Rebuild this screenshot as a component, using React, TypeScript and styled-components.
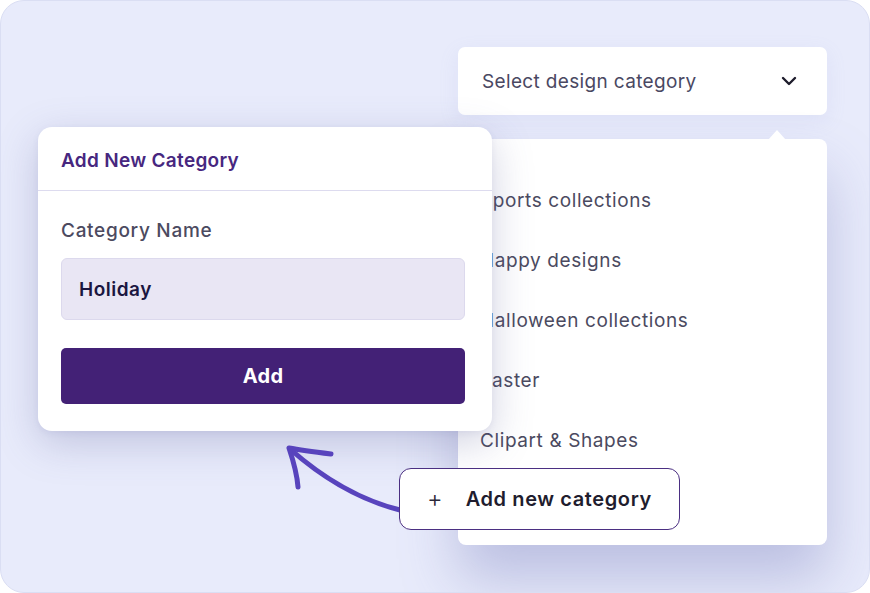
import styled, {createGlobalStyle} from "styled-components";

const GlobalStyle = createGlobalStyle`
    html, body {
        margin: 0;
        padding: 0;
        background: #ffffff;
        font-family: Inter, "Liberation Sans", sans-serif;
    }
    * { box-sizing: border-box; }
`

const Canvas = styled.div`
    position: relative;
    width: 870px;
    height: 593px;
    border-radius: 24px;
    border: 1px solid #dadef3;
    background: #e8ebfb;
    overflow: hidden;
    display: flex;
    justify-content: flex-end;
    padding: 46px 42px 0 0;
`

const SelectColumn = styled.div`
    width: 369px;
    display: flex;
    flex-direction: column;
    gap: 24px;
`

const SelectBox = styled.div`
    height: 68px;
    background: #ffffff;
    border-radius: 7px;
    display: flex;
    align-items: center;
    justify-content: space-between;
    padding: 0 30px 0 24px;
    font-size: 19px;
    letter-spacing: 0.35px;
    color: #4a4862;
    box-shadow: 0 6px 20px rgba(150, 155, 210, 0.12);
`

const ListPanel = styled.div`
    position: relative;
    height: 406px;
    background: #ffffff;
    border-radius: 8px;
    padding: 31px 0 0 22px;
    display: flex;
    flex-direction: column;
    box-shadow: 0 34px 56px rgba(115, 122, 185, 0.38);

    &::before {
        content: "";
        position: absolute;
        top: -9px;
        right: 41px;
        border-left: 9px solid transparent;
        border-right: 9px solid transparent;
        border-bottom: 10px solid #ffffff;
    }
`

const ListItem = styled.div`
    height: 60px;
    display: flex;
    align-items: center;
    font-size: 19px;
    letter-spacing: 0.6px;
    color: #4b4a60;
`

const Modal = styled.div`
    position: absolute;
    left: 37px;
    top: 126px;
    width: 454px;
    height: 304px;
    background: #ffffff;
    border-radius: 14px;
    box-shadow: 0 12px 40px rgba(90, 95, 150, 0.28), 0 2px 6px rgba(90, 95, 150, 0.08);
    display: flex;
    flex-direction: column;
`

const ModalHeader = styled.div`
    height: 64px;
    padding: 4px 23px 0;
    display: flex;
    align-items: center;
    border-bottom: 1.5px solid #dddbef;
    font-size: 19px;
    font-weight: 600;
    letter-spacing: 0.3px;
    color: #47277f;
`

const ModalBody = styled.div`
    padding: 28px 27px 0 23px;
    display: flex;
    flex-direction: column;
`

const FieldLabel = styled.div`
    font-size: 19px;
    font-weight: 500;
    letter-spacing: 0.7px;
    color: #4c4a5f;
    margin-bottom: 16px;
`

const TextInput = styled.div`
    height: 62px;
    border-radius: 6px;
    border: 1px solid #dcd9ed;
    background: #e9e6f4;
    display: flex;
    align-items: center;
    padding: 0 17px;
    font-size: 19px;
    font-weight: 600;
    letter-spacing: 0.5px;
    color: #1b1640;
`

const PrimaryButton = styled.button`
    margin-top: 28px;
    height: 56px;
    border: none;
    border-radius: 5px;
    background: #432176;
    color: #ffffff;
    font-family: inherit;
    font-size: 20px;
    font-weight: 700;
    letter-spacing: 0.3px;
`

const Pill = styled.div`
    position: absolute;
    left: 398px;
    top: 467px;
    width: 281px;
    height: 62px;
    border-radius: 12px;
    border: 1.5px solid #4b2f82;
    background: #ffffff;
    display: flex;
    align-items: center;
    padding-left: 27px;
    gap: 23px;
    font-size: 20px;
    font-weight: 600;
    letter-spacing: 0.6px;
    color: #1f1d2e;
`

const PlusGlyph = styled.span`
    font-size: 24px;
    font-weight: 300;
    line-height: 1;
    letter-spacing: 0;
    color: #2a2838;
`

const Arrow = styled.svg`
    position: absolute;
    left: 279px;
    top: 439px;
    overflow: visible;
`

const items = ["Sports collections", "Happy designs", "Halloween collections", "Easter", "Clipart & Shapes"]

const App = () => <>
    <GlobalStyle/>
    <Canvas>
        <SelectColumn>
            <SelectBox>
                Select design category
                <svg width="16" height="10" viewBox="0 0 16 10">
                    <path d="M2 2l6 6 6-6" fill="none" stroke="#1e1c2c" strokeWidth="2.4" strokeLinecap="round" strokeLinejoin="round"/>
                </svg>
            </SelectBox>
            <ListPanel>
                {items.map(item => <ListItem key={item}>{item}</ListItem>)}
            </ListPanel>
        </SelectColumn>
        <Modal>
            <ModalHeader>Add New Category</ModalHeader>
            <ModalBody>
                <FieldLabel>Category Name</FieldLabel>
                <TextInput>Holiday</TextInput>
                <PrimaryButton>Add</PrimaryButton>
            </ModalBody>
        </Modal>
        <Arrow width="130" height="80" viewBox="0 0 130 80">
            <path d="M120 70 C 80 60, 45 40, 10 9" fill="none" stroke="#5844bd" strokeWidth="5" strokeLinecap="round"/>
            <path d="M51 14 C 35 12, 20 10, 9 8 M9 8 C 13 20, 17 33, 18 47" fill="none" stroke="#5844bd" strokeWidth="5" strokeLinecap="round" strokeLinejoin="round"/>
        </Arrow>
        <Pill>
            <PlusGlyph>+</PlusGlyph>
            Add new category
        </Pill>
    </Canvas>
</>

export default App
